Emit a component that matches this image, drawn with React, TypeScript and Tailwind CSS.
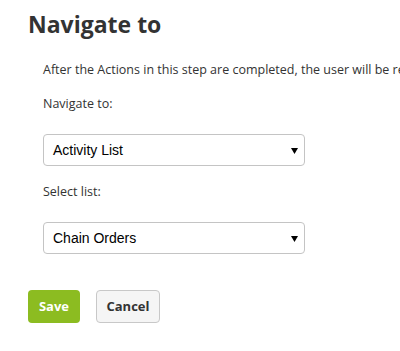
import React from "react";

function Select({ value }: { value: string }) {
  return (
    <div className="relative flex h-[32px] w-[262px] items-center rounded-[4px] border border-[#c4c4c4] bg-white pl-[9px] font-['Liberation_Sans',Arial,sans-serif] text-[14px] text-[#000]">
      {value}
      <svg className="absolute right-[6px] top-[13px]" width="7" height="6" viewBox="0 0 7 6">
        <path d="M0 0 H7 L3.5 6 Z" fill="#000" />
      </svg>
    </div>
  );
}

export default function App() {
  return (
    <div className="h-[351px] w-[400px] overflow-hidden bg-white font-['Open_Sans',sans-serif] text-[#333]">
      <h1 className="pl-[28px] pt-[8px] text-[23px] font-bold leading-[32px] text-[#333]">Navigate to</h1>
      <div className="pl-[43px] pt-[21px]">
        <p className="whitespace-nowrap text-[12.5px] leading-[18px]">
          After the Actions in this step are completed, the user will be redirected
        </p>
        <p className="mt-[16px] text-[12.5px] leading-[18px]">Navigate to:</p>
        <div className="mt-[21px]">
          <Select value="Activity List" />
        </div>
        <p className="mt-[17px] text-[12.5px] leading-[18px]">Select list:</p>
        <div className="mt-[21px]">
          <Select value="Chain Orders" />
        </div>
      </div>
      <div className="mt-[36px] flex gap-[16px] pl-[28px]">
        <button className="h-[33px] w-[52px] rounded-[4px] bg-[#8cbc21] text-[13px] font-bold text-white">Save</button>
        <button className="h-[33px] w-[64px] rounded-[4px] border border-[#c8c8c8] bg-[#f5f5f5] text-[13px] font-bold text-[#333]">Cancel</button>
      </div>
    </div>
  );
}
